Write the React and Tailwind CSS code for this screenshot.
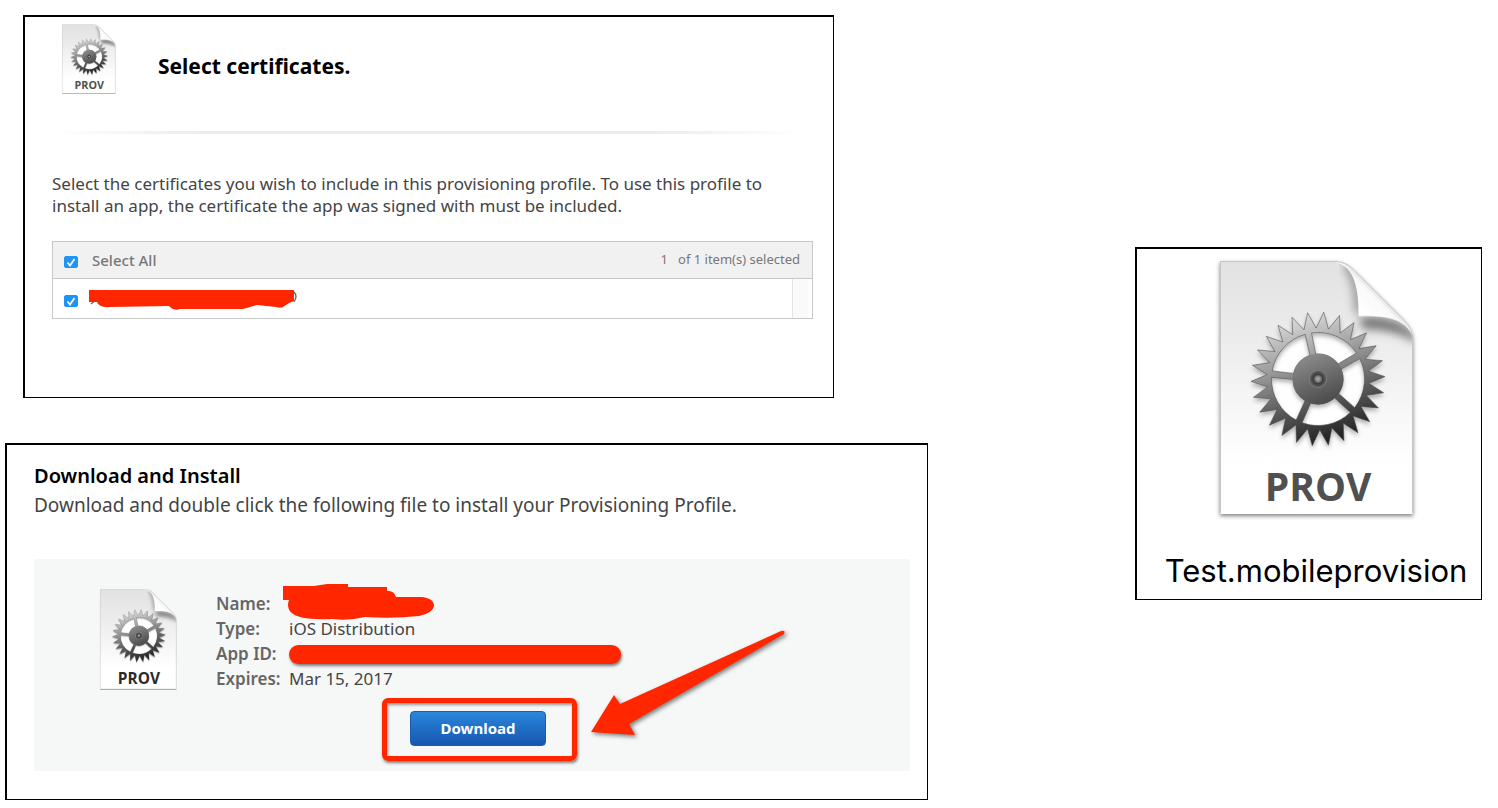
import React, { useId } from "react";

const CX = 106;
const CY = 124;

function polar(radius, degrees) {
  const a = (degrees * Math.PI) / 180;
  return `${(CX + radius * Math.sin(a)).toFixed(2)} ${(CY - radius * Math.cos(a)).toFixed(2)}`;
}

const TEETH = 26;
const STEP = 360 / TEETH;

const teethPath =
  "M" +
  Array.from({ length: TEETH }, (_, i) => {
    const a = 4.9 + i * STEP;
    return `${polar(67, a)} L${polar(51, a + STEP / 2)}`;
  }).join(" L") +
  " Z";

const windowsPath = Array.from({ length: 5 }, (_, i) => {
  const start = -12 + i * 72;
  const end = start + 72;
  return `M${polar(46.5, start + 4)} A46.5 46.5 0 0 1 ${polar(46.5, end - 4)} L${polar(25, end - 7)} A25 25 0 0 0 ${polar(25, start + 7)} Z`;
}).join(" ");

const PAGE = "M8 6H122C133 6 138 11 145 18L190 63C198 71 201 76 201 85V259H8Z";

function ProvisionIcon({ className, textClass }) {
  const id = useId().replace(/[^a-zA-Z0-9]/g, "");
  const ref = (name) => `url(#${name}${id})`;
  return (
    <svg viewBox="0 0 210 270" preserveAspectRatio="none" className={className} role="img" aria-label="Provisioning profile file">
      <defs>
        <linearGradient id={`page${id}`} x1="0" y1="0" x2="0" y2="1">
          <stop offset="0" stopColor="#e2e2e2" />
          <stop offset="0.3" stopColor="#ececec" />
          <stop offset="0.8" stopColor="#ffffff" />
        </linearGradient>
        <linearGradient id={`fold${id}`} x1="149" y1="56" x2="171" y2="34" gradientUnits="userSpaceOnUse">
          <stop offset="0" stopColor="#ffffff" />
          <stop offset="0.6" stopColor="#fafafa" />
          <stop offset="1" stopColor="#c4c4c4" />
        </linearGradient>
        <linearGradient id={`gear${id}`} x1="86" y1="58" x2="126" y2="188" gradientUnits="userSpaceOnUse">
          <stop offset="0" stopColor="#dedede" />
          <stop offset="0.35" stopColor="#9c9c9c" />
          <stop offset="0.65" stopColor="#5c5c5c" />
          <stop offset="1" stopColor="#1c1c1c" />
        </linearGradient>
        <linearGradient id={`hub${id}`} x1="95" y1="98" x2="117" y2="150" gradientUnits="userSpaceOnUse">
          <stop offset="0" stopColor="#8d8d8d" />
          <stop offset="1" stopColor="#484848" />
        </linearGradient>
        <radialGradient id={`axle${id}`}>
          <stop offset="0" stopColor="#b0b0b0" />
          <stop offset="0.35" stopColor="#777777" />
          <stop offset="0.5" stopColor="#3c3c3c" />
          <stop offset="0.85" stopColor="#5a5a5a" />
          <stop offset="1" stopColor="#8a8a8a" />
        </radialGradient>
        <filter id={`drop${id}`} x="-10%" y="-10%" width="120%" height="120%">
          <feDropShadow dx="0" dy="2" stdDeviation="2" floodColor="#000" floodOpacity="0.5" />
        </filter>
        <filter id={`cast${id}`} x="-20%" y="-20%" width="140%" height="140%">
          <feDropShadow dx="0" dy="3" stdDeviation="2" floodColor="#000" floodOpacity="0.3" />
        </filter>
        <filter id={`soft${id}`} x="-50%" y="-50%" width="200%" height="200%">
          <feGaussianBlur stdDeviation="5" />
        </filter>
        <clipPath id={`clip${id}`}>
          <path d={PAGE} />
        </clipPath>
      </defs>
      <path d={PAGE} fill={ref("page")} filter={ref("drop")} />
      <g clipPath={ref("clip")}>
        <path d="M134 8C145 20 147 40 147 58" fill="none" stroke="#777" strokeOpacity="0.75" strokeWidth="9" filter={ref("soft")} />
        <path d="M148 62C176 60 190 66 204 80V88C190 78 172 74 150 74Z" fill="#555" fillOpacity="0.8" filter={ref("soft")} />
      </g>
      <path
        d="M124 7C133 8 140 13 145 18L190 63C196 69 199 73 200 79C192 64 176 60 147 61C147 33 143 12 124 7Z"
        fill={ref("fold")}
        stroke="#fff"
        strokeWidth="0.700"
      />
      <path d="M8.500 258.500V6.500H122C133 6.500 138 11 145 18L190 63C198 71 200.500 76 200.500 85V258.500" fill="none" stroke="#c6c6c6" strokeWidth="1" />
      <path d={windowsPath} fill="#fff" fillOpacity="0.9" />
      <g filter={ref("cast")}>
        <path d={`${teethPath} ${windowsPath}`} fill={ref("gear")} fillRule="evenodd" stroke="#4a4a4a" strokeOpacity="0.7" strokeWidth="0.8" />
      </g>
      <circle cx={CX} cy={CY} r="25.500" fill={ref("hub")} />
      <circle cx={CX} cy={CY} r="9" fill={ref("axle")} />
      <text x="106" y="246" textAnchor="middle" className={textClass}>
        PROV
      </text>
    </svg>
  );
}

function Checkbox({ id }) {
  return (
    <span className="relative mt-1 flex h-3 w-3.5 shrink-0">
      <input
        id={id}
        type="checkbox"
        defaultChecked
        className="peer h-3 w-3.5 appearance-none rounded-xs border border-[#2094f5] bg-white checked:bg-[#2094f5]"
      />
      <svg viewBox="0 0 14 12" className="pointer-events-none absolute inset-0 hidden h-3 w-3.5 peer-checked:block" aria-hidden="true">
        <path d="M3.500 6.500L6 9.500L10.500 3" fill="none" stroke="#fff" strokeWidth="1.700" />
      </svg>
    </span>
  );
}

function SelectCertificates() {
  return (
    <section className="mr-[94px] ml-[18px] h-[383px] border border-t-2 border-l-2 border-black pr-5 pl-[27px] text-[#444]">
      <header className="flex items-start gap-10 pt-1.5 pl-2">
        <ProvisionIcon className="h-[73px] w-[58px]" textClass="fill-[#505050] font-['Open_Sans',sans-serif] text-[39px] font-bold" />
        <h1 className="pt-[29px] text-[21px] leading-7 font-bold text-black">Select certificates.</h1>
      </header>
      <div className="mt-[35px] mr-2 h-[3px] bg-[linear-gradient(to_right,transparent,#ececec_20%,#ececec_80%,transparent)]" />
      <p className="mt-[39px] text-[17px] leading-[22px]">
        Select the certificates you wish to include in this provisioning profile. To use this profile to
        <br />
        install an app, the certificate the app was signed with must be included.
      </p>
      <div className="mt-6 border border-[#c8c8c8]">
        <div className="flex h-[37px] items-center border-b border-[#c8c8c8] bg-[#f1f1f1] pr-3 pl-[11px]">
          <Checkbox id="select-all" />
          <label htmlFor="select-all" className="ml-3.5 text-[15px] font-medium text-[#777]">
            Select All
          </label>
          <span className="ml-auto flex gap-2.5 text-[13px] text-[#777]">
            <span>1</span>
            <span>of 1 item(s) selected</span>
          </span>
        </div>
        <div className="flex h-[39px] items-center pl-[11px]">
          <Checkbox id="certificate" />
          <label htmlFor="certificate" className="ml-2.5">
            <svg viewBox="0 0 210 22" className="h-[22px] w-[210px]" role="img" aria-label="Certificate name hidden">
              <path d="M3 16L8 12M206 4Q210 8 206 14" fill="none" stroke="#666" strokeWidth="1.300" />
              <path
                d="M1 2H206V13L201 15L195 19Q192 20 188 19L169 17L155 21H92Q86 23 82 19Q81 18 81 18L22 19Q11 20 9 14H1Z"
                fill="#ff2600"
              />
            </svg>
          </label>
          <span className="mr-1 ml-auto h-full w-4 border-l border-[#e4e4e4] bg-[#fafafa]" />
        </div>
      </div>
    </section>
  );
}

function Row({ label, children }) {
  return (
    <>
      <dt className="font-semibold text-[#666]">{label}</dt>
      <dd className="relative">{children}</dd>
    </>
  );
}

function DownloadPanel() {
  return (
    <section className="mt-[45px] h-[357px] border border-t-2 border-l-2 border-black pr-[17px] pl-[27px] text-[#444]">
      <h2 className="pt-[17px] text-xl leading-7 font-semibold text-black">Download and Install</h2>
      <p className="text-[19px] leading-[30px]">Download and double click the following file to install your Provisioning Profile.</p>
      <div className="mt-[39px] flex h-[212px] items-start bg-[#f6f8f7] pt-7 pl-[63px]">
        <ProvisionIcon className="h-[106px] w-[83px]" textClass="fill-[#2a2a2a] font-['Open_Sans',sans-serif] text-[39px] font-bold" />
        <div className="relative ml-9 pt-1">
          <dl className="grid grid-cols-[73px_auto] text-[17px] leading-[25px]">
            <Row label="Name:">
              <svg viewBox="0 0 152 37" className="absolute -top-[7px] -left-1.5 h-[37px] w-[152px]" role="img" aria-label="Name hidden">
                <path
                  d="M0 2H31L44 0H65V3H104V7Q111 6 113 13H138Q151 14 151 22Q150 29 136 32Q110 35 82 33Q65 37 50 35Q25 36 14 32Q2 27 6 16H0Z"
                  fill="#ff2600"
                />
              </svg>
            </Row>
            <Row label="Type:">iOS Distribution</Row>
            <Row label="App ID:">
              <span
                role="img"
                aria-label="App ID hidden"
                className="mt-1 block h-[19px] w-[332px] rounded-full bg-[#ff2600] shadow-[1px_2px_3px_rgba(0,0,0,0.5)]"
              />
            </Row>
            <Row label="Expires:">Mar 15, 2017</Row>
          </dl>
          <div className="mt-[7px] ml-[166px] w-[195px] rounded-md border-5 border-[#ff2600] pt-2 pr-[26px] pb-2.5 pl-[23px] shadow-[1px_2px_3px_rgba(0,0,0,0.5),inset_1px_2px_3px_rgba(0,0,0,0.4)]">
            <button
              type="button"
              className="block h-[35px] w-full rounded-sm border border-[#1a5cb0] bg-linear-to-b from-[#2a87dc] to-[#1857b0] text-[15px] leading-none font-bold text-white"
            >
              Download
            </button>
          </div>
          <svg viewBox="0 0 200 110" className="absolute top-[43px] left-[373px] h-[110px] w-[200px] drop-shadow-[2px_2px_2px_rgba(0,0,0,0.5)]" aria-hidden="true">
            <path d="M2 102L25 65L31 74L192 1Q197 0 195 4L40 94L46 105Z" fill="#ff2600" />
          </svg>
        </div>
      </div>
    </section>
  );
}

function FileCard() {
  return (
    <figure className="mt-[232px] flex h-[353px] flex-col items-center self-start border border-t-2 border-l-2 border-black pt-1.5 pl-4">
      <ProvisionIcon className="h-[270px] w-[210px] shrink-0" textClass="fill-[#505050] font-['Open_Sans',sans-serif] text-[39px] font-bold" />
      <figcaption className="mt-[26px] pr-0.5 font-['Inter',sans-serif] text-[31px] leading-10 text-black">Test.mobileprovision</figcaption>
    </figure>
  );
}

export default function App() {
  return (
    <main className="grid min-h-screen grid-cols-[923fr_347fr] gap-[207px] bg-white pt-[15px] pr-4 pb-2 pl-[5px] font-['Noto_Sans',sans-serif]">
      <div>
        <SelectCertificates />
        <DownloadPanel />
      </div>
      <FileCard />
    </main>
  );
}
